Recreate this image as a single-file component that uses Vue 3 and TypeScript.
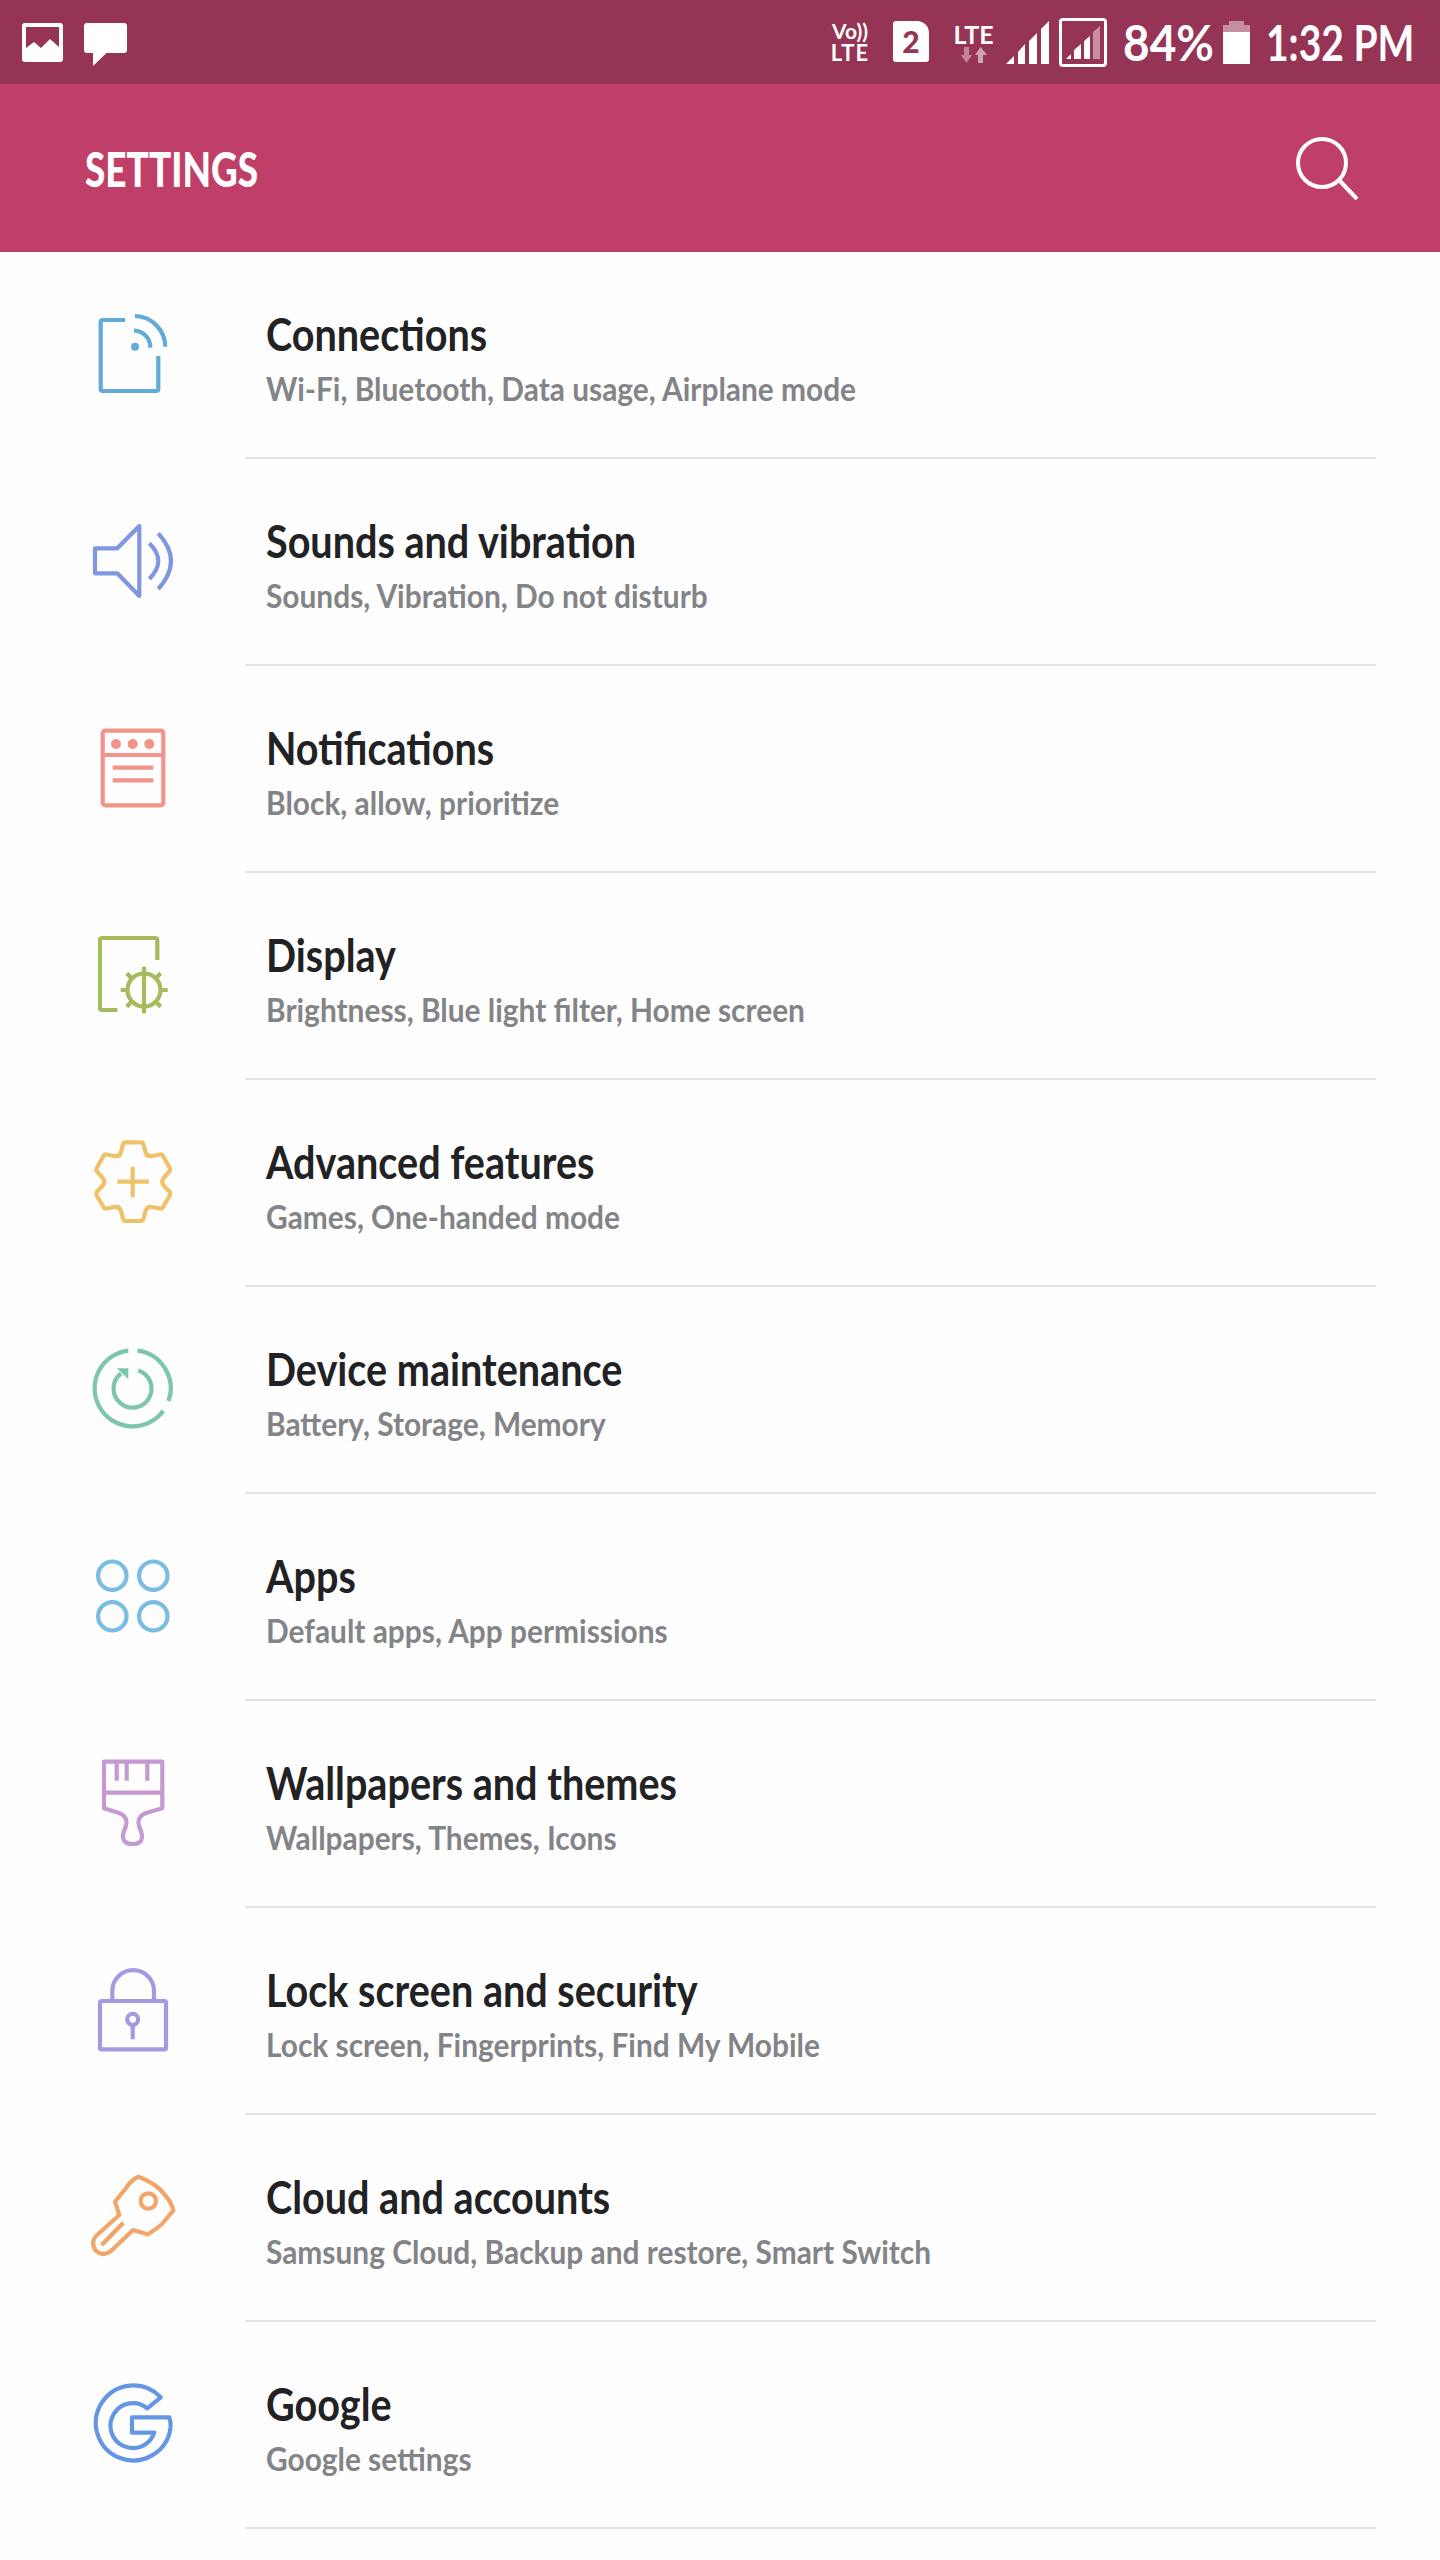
<template>
  <div class="screen">
    <div class="status-bar">
      <div class="status-left">
        <svg viewBox="0 0 41 39" width="41" height="39">
          <path fill="#fff" fill-rule="evenodd" d="M3 0H38a3 3 0 0 1 3 3V36a3 3 0 0 1-3 3H3a3 3 0 0 1-3-3V3a3 3 0 0 1 3-3ZM4 4V25L12 19L19 25L28 16L37 24V4Z" />
        </svg>
        <svg viewBox="0 0 43 43" width="43" height="43">
          <path fill="#fff" d="M3 0H40a3 3 0 0 1 3 3V27a3 3 0 0 1-3 3H22.500L9 43V30H3a3 3 0 0 1-3-3V3a3 3 0 0 1 3-3Z" />
        </svg>
      </div>
      <div class="status-right">
        <div class="volte">
          <span class="volte-top">Vo))</span>
          <span>LTE</span>
        </div>
        <div class="sim">2</div>
        <div class="lte">
          <span>LTE</span>
          <svg viewBox="0 0 26 16" width="26" height="16">
            <path fill="#fff" opacity="0.4" d="M3 0H8V8H11L5.500 16L0 8H3Z" />
            <path fill="#fff" opacity="0.55" d="M17 16H22V8H26L19.500 0L14 8H17Z" />
          </svg>
        </div>
        <svg class="signal" viewBox="0 0 43 43" width="43" height="43">
          <path fill="#fff" d="M0 43L8 35V43ZM12 43V31L19 23V43ZM23 43V20L31 12V43ZM35 43V8L43 0V43Z" />
        </svg>
        <div class="signal-box">
          <svg viewBox="0 0 34 33" width="34" height="33">
            <path fill="#fff" d="M0 33L5 28V33ZM8 33V24L15 18V33ZM18 33V15L24 10V33Z" />
            <path fill="#fff" opacity="0.45" d="M27 33V6L34 0V33Z" />
          </svg>
        </div>
        <div class="pct"><span>84%</span></div>
        <svg class="battery" viewBox="0 0 27 43" width="27" height="43">
          <path fill="#fff" opacity="0.45" d="M6 0H21V4H27V11H0V4H6Z" />
          <rect fill="#fff" y="11" width="27" height="32" />
        </svg>
        <div class="time"><span>1:32 PM</span></div>
      </div>
    </div>

    <header class="app-bar">
      <h1>SETTINGS</h1>
      <svg viewBox="0 0 64 64" width="64" height="64">
        <circle cx="27" cy="27" r="24" fill="none" stroke="#fff" stroke-width="4" />
        <path d="M44 44L62 63" stroke="#fff" stroke-width="4" fill="none" />
      </svg>
    </header>

    <ul class="list">
      <li v-for="item in items" :key="item.title" class="row">
        <div class="icon-cell">
          <svg viewBox="0 0 90 90" width="90" height="90" fill="none" :stroke="item.color" stroke-width="4.200" stroke-linejoin="round">
            <template v-if="item.icon === 'connections'">
              <path d="M37 10H14.700a2 2 0 0 0-2 2V79a2 2 0 0 0 2 2H68.300a2 2 0 0 0 2-2V46" />
              <path d="M47 6A31 31 0 0 1 77.300 36.700" />
              <path d="M46 20.700A16.500 16.500 0 0 1 62.300 37.700" />
              <circle cx="47" cy="36.700" r="4" :fill="item.color" stroke="none" />
            </template>
            <template v-else-if="item.icon === 'sounds'">
              <path d="M7 31.300H29.300L51.300 9V79L29.300 56.300H7Z" />
              <path d="M61.300 26.300Q79.300 44 61.300 62" />
              <path d="M70.300 16.300Q95.700 44 70.300 72" />
            </template>
            <template v-else-if="item.icon === 'notifications'">
              <rect x="14.700" y="6.700" width="60.600" height="74.600" rx="2.500" />
              <path d="M14.700 31H75.300" />
              <circle cx="28" cy="20" r="5" :fill="item.color" stroke="none" />
              <circle cx="44.700" cy="20" r="5" :fill="item.color" stroke="none" />
              <circle cx="61.300" cy="20" r="5" :fill="item.color" stroke="none" />
              <path d="M24.700 43.700H65.300M24.700 56.300H65.300" />
            </template>
            <template v-else-if="item.icon === 'display'">
              <path d="M29.300 79H14a2 2 0 0 1-2-2V9a2 2 0 0 1 2-2H67.300a2 2 0 0 1 2 2V29" />
              <circle cx="56" cy="59" r="16.500" />
              <path d="M56 35.700V82.300M32.700 59H40.300M72 59H79.700M38.700 42.300L44 47.700M72.700 42.300L67.300 47.700M38.700 75.700L44 70.300M72.700 75.700L67.300 70.300" />
            </template>
            <template v-else-if="item.icon === 'advanced'">
              <path d="M37 4.300H53.700Q55 4.300 56 8L57.500 14Q58.500 19 64 18L72 16.500Q74 16 75 18L81.500 29.500Q83 32 81 34L76 39.500Q72.500 43.700 76 48L81 53Q83 55.300 81.500 58L75 69Q74 71 72 70.500L64 69Q59 68 57.500 73L56 79Q55 83 53 83H37.700Q35.500 83 34.500 79L33 73Q31.500 68 26.500 69L18.500 70.500Q16.500 71 15.500 69L9 58Q7.500 55.300 9.500 53L14.500 48Q18 43.700 14.500 39.500L9.500 34Q7.500 32 9 29.500L15.500 18Q16.500 16 18.500 16.500L26.500 18Q32 19 33 14L34.500 8Q35.500 4.300 37 4.300Z" />
              <path d="M29.300 43.700H60.700M44.700 28.700V59.300" />
            </template>
            <template v-else-if="item.icon === 'maintenance'">
              <path d="M40.300 5.600A38 38 0 1 0 75.300 65.800" />
              <path d="M49.500 5.600A38 38 0 0 1 80.500 56" />
              <path d="M50.300 25.500A19 19 0 1 1 33 28.500" />
              <path d="M29 23.300H40.300V34.300Z" :fill="item.color" stroke="none" />
            </template>
            <template v-else-if="item.icon === 'apps'">
              <circle cx="24.300" cy="23.700" r="14.200" />
              <circle cx="65.300" cy="23.700" r="14.200" />
              <circle cx="24.300" cy="64.300" r="14.200" />
              <circle cx="65.300" cy="64.300" r="14.200" />
            </template>
            <template v-else-if="item.icon === 'wallpapers'">
              <path d="M16 2.700H74.300V49.300L58 54Q50 57 50.500 64Q51 68 53 72Q57 85 44.700 85Q32 85 36 72Q38 68 38.500 64Q39 57 31 54L16 49.300Z" />
              <path d="M16 33.700H74.300M28.700 2.700V21.700M38.700 2.700V21.700M59.300 2.700V21.700" />
            </template>
            <template v-else-if="item.icon === 'lock'">
              <rect x="12" y="35" width="66" height="48.300" rx="1.500" />
              <path d="M24.300 35V25A20.850 20.850 0 0 1 66 25V35" />
              <circle cx="44.700" cy="53.300" r="5.500" />
              <path d="M44.700 58.800V73.300" />
            </template>
            <template v-else-if="item.icon === 'cloud'">
              <path d="M50.300 3.700Q68 10 77 22Q84 30 85.300 37.700L74 51Q66 58 59.300 61.300L45 57L23 78Q15 84 8 78Q2 70 8 63L31.300 42L27 28.700L38 15Q44 6 50.300 3.700Z" />
              <path d="M35.300 49.700L13.700 72" />
              <circle cx="60.300" cy="28" r="7.700" />
            </template>
            <template v-else-if="item.icon === 'google'">
              <path d="M72.700 17.300A37.500 37.500 0 1 0 82.500 48Q83 42 81.300 37.300H44V52.700H66.300A22.500 22.500 0 1 1 59.300 28.300Z" />
            </template>
          </svg>
        </div>
        <div class="row-body">
          <h2>{{ item.title }}</h2>
          <p>{{ item.sub }}</p>
        </div>
      </li>
    </ul>
  </div>
</template>

<script setup lang="ts">
interface Item {
  icon: string
  title: string
  sub: string
  color: string
}

const items: Item[] = [
  { icon: 'connections', title: 'Connections', sub: 'Wi-Fi, Bluetooth, Data usage, Airplane mode', color: '#62abd8' },
  { icon: 'sounds', title: 'Sounds and vibration', sub: 'Sounds, Vibration, Do not disturb', color: '#7f97e0' },
  { icon: 'notifications', title: 'Notifications', sub: 'Block, allow, prioritize', color: '#f29489' },
  { icon: 'display', title: 'Display', sub: 'Brightness, Blue light filter, Home screen', color: '#a5bb5c' },
  { icon: 'advanced', title: 'Advanced features', sub: 'Games, One-handed mode', color: '#efc168' },
  { icon: 'maintenance', title: 'Device maintenance', sub: 'Battery, Storage, Memory', color: '#7cc5ae' },
  { icon: 'apps', title: 'Apps', sub: 'Default apps, App permissions', color: '#7abde2' },
  { icon: 'wallpapers', title: 'Wallpapers and themes', sub: 'Wallpapers, Themes, Icons', color: '#c49ad0' },
  { icon: 'lock', title: 'Lock screen and security', sub: 'Lock screen, Fingerprints, Find My Mobile', color: '#a49ae2' },
  { icon: 'cloud', title: 'Cloud and accounts', sub: 'Samsung Cloud, Backup and restore, Smart Switch', color: '#f3a468' },
  { icon: 'google', title: 'Google', sub: 'Google settings', color: '#6496e4' },
]
</script>

<style>
body {
  background: #fff;
}
</style>

<style scoped>
.screen {
  width: 1440px;
  height: 2560px;
  overflow: hidden;
  background: #fefefe;
  font-family: "Lato", "Liberation Sans", sans-serif;
}

.status-bar {
  height: 84px;
  background: #953455;
  color: #fff;
  display: flex;
  justify-content: space-between;
  padding: 0 27px 0 22px;
  box-sizing: border-box;
}

.status-left {
  display: flex;
  align-items: flex-start;
  gap: 21px;
  padding-top: 23px;
}

.status-right {
  display: flex;
  align-items: center;
}

.volte {
  display: flex;
  flex-direction: column;
  align-items: center;
  width: 40px;
  font-size: 22px;
  line-height: 22px;
  font-weight: 700;
  letter-spacing: 1px;
  margin-right: 23px;
}

.volte-top {
  font-size: 21px;
  letter-spacing: 0;
}

.sim {
  width: 36px;
  height: 41px;
  background: #fff;
  color: #953455;
  border-radius: 3px 12px 3px 3px;
  font-size: 30px;
  font-weight: 900;
  line-height: 41px;
  text-align: center;
  margin: -1px 23px 0 0;
}

.lte {
  display: flex;
  flex-direction: column;
  align-items: center;
  width: 43px;
  font-size: 25px;
  line-height: 25px;
  font-weight: 700;
  margin-right: 11px;
}

.signal {
  margin-right: 10px;
}

.signal-box {
  width: 48px;
  height: 49px;
  box-sizing: border-box;
  border: 3px solid #fff;
  border-radius: 4px;
  display: flex;
  align-items: flex-end;
  justify-content: center;
  padding-bottom: 5px;
  margin-right: 16px;
}

.pct,
.time {
  font-size: 50px;
  font-weight: 700;
  line-height: 50px;
  white-space: nowrap;
}

.pct span,
.time span {
  display: inline-block;
  transform-origin: left center;
}

.pct {
  width: 87px;
  margin-right: 13px;
}

.pct span {
  transform: scaleX(0.92);
}

.time {
  width: 147px;
}

.time span {
  transform: scaleX(0.78);
}

.battery {
  margin-right: 16px;
}

.app-bar {
  height: 168px;
  background: #bf3f69;
  display: flex;
  align-items: center;
  justify-content: space-between;
  padding: 0 81px 0 85px;
  box-sizing: border-box;
}

.app-bar h1 {
  margin: 0;
  color: #fff;
  font-size: 48px;
  font-weight: 900;
  transform: scaleX(0.77);
  transform-origin: left center;
}

.list {
  list-style: none;
  margin: 0;
  padding: 0;
}

.row {
  height: 207px;
  display: flex;
}

.icon-cell {
  width: 245px;
  flex: none;
  padding: 58px 0 0 88px;
  box-sizing: border-box;
}

.row-body {
  width: 1131px;
  padding: 57px 0 0 21px;
  box-sizing: border-box;
  border-bottom: 2px solid #e3e3e3;
}

.row-body h2,
.row-body p {
  white-space: nowrap;
  transform-origin: left center;
}

.row-body h2 {
  margin: 0 0 9px;
  font-size: 46px;
  line-height: 50px;
  font-weight: 700;
  color: #222224;
  transform: scaleX(0.86);
}

.row-body p {
  margin: 0;
  font-size: 33px;
  line-height: 40px;
  font-weight: 700;
  color: #838487;
  transform: scaleX(0.905);
}
</style>
